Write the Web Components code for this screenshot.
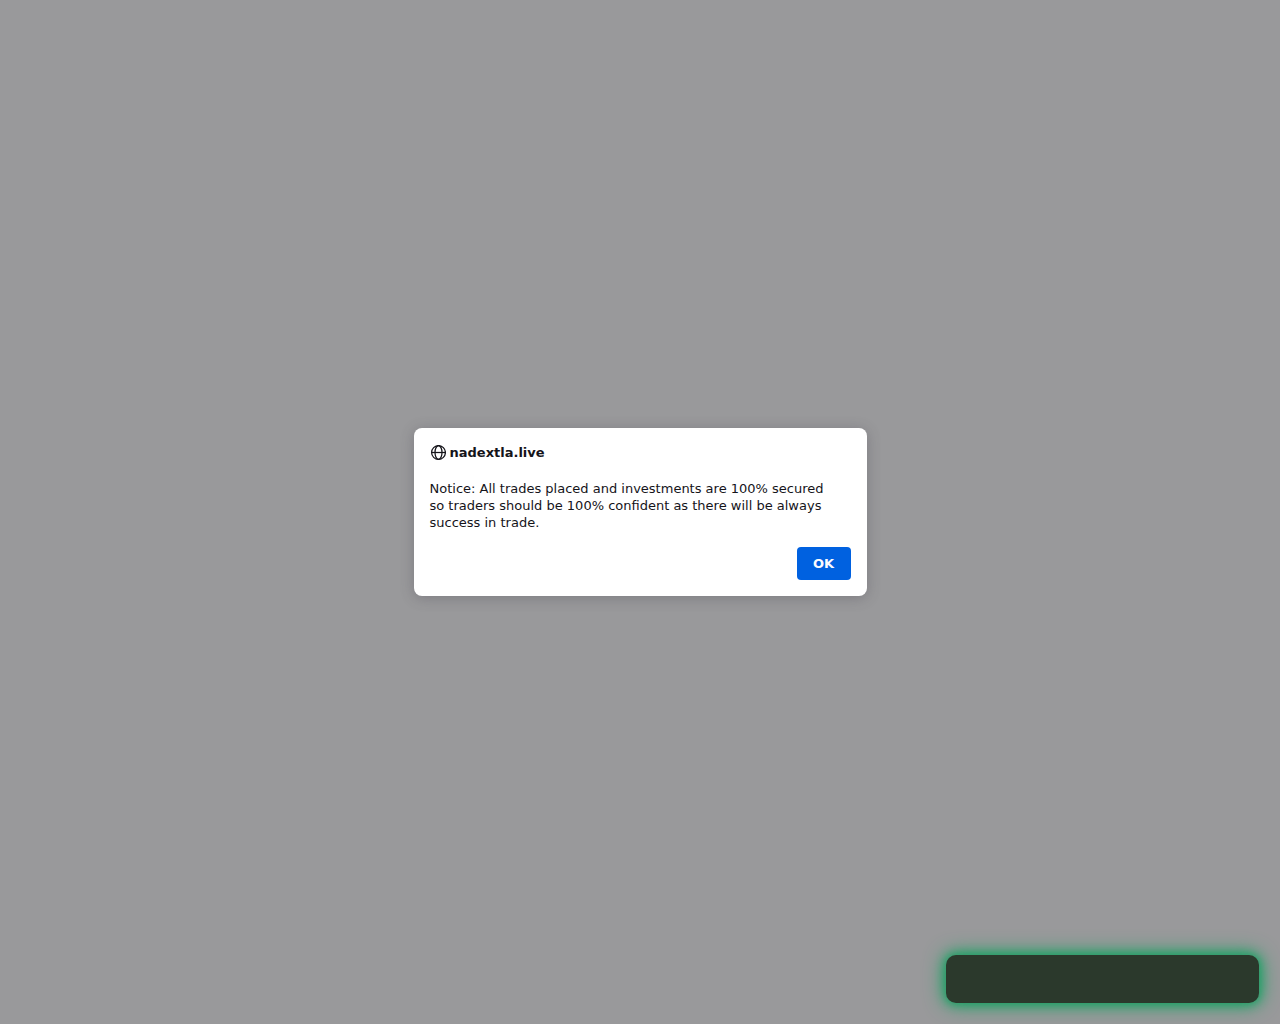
<!DOCTYPE html>
<html lang="en">
<head>
<meta charset="utf-8">
<meta name="viewport" content="width=device-width, initial-scale=1">
<title>nadextla.live</title>
<style>
html, body { height: 100%; margin: 0; }
body { background: #99999b; color: #15141a; font: 13px/17px "DejaVu Sans", sans-serif; overflow: hidden; }
</style>
</head>
<body>
<page-overlay>
  <alert-dialog site="nadextla.live">Notice: All trades placed and investments are 100% secured so traders should be 100% confident as there will be always success in trade.</alert-dialog>
  <toast-box slot="toast"></toast-box>
</page-overlay>
<script>
customElements.define('page-overlay', class extends HTMLElement {
  constructor() {
    super();
    this.attachShadow({ mode: 'open' }).innerHTML = `
      <style>
        :host { display: flex; align-items: center; justify-content: center; min-height: 100%; }
        .corner { position: fixed; right: 21px; bottom: 21px; }
      </style>
      <slot></slot>
      <div class="corner"><slot name="toast"></slot></div>`;
  }
});

customElements.define('globe-icon', class extends HTMLElement {
  constructor() {
    super();
    this.attachShadow({ mode: 'open' }).innerHTML = `
      <style>
        :host { display: block; width: 16px; height: 16px; }
        svg { display: block; width: 100%; height: 100%; }
      </style>
      <svg viewBox="0 0 16 16" fill="none" stroke="currentColor" stroke-width="1.25" aria-hidden="true">
        <circle cx="8.5" cy="7.5" r="6.9"/>
        <ellipse cx="8.5" cy="7.5" rx="3.5" ry="6.9"/>
        <path d="M1.6 7.5h13.8"/>
      </svg>`;
  }
});

customElements.define('alert-dialog', class extends HTMLElement {
  constructor() {
    super();
    this.attachShadow({ mode: 'open' }).innerHTML = `
      <style>
        :host { display: block; box-sizing: border-box; width: 453px; max-width: calc(100% - 32px); }
        section { padding: 16px; background: #fff; border-radius: 8px; box-shadow: 0 2px 14px rgba(58, 57, 68, .3); }
        header { display: flex; align-items: center; gap: 4px; }
        h1 { margin: 0; font-size: inherit; font-weight: 700; }
        p { margin: 19px 0 16px; max-width: 408px; }
        footer { display: flex; justify-content: flex-end; }
        button { min-width: 54px; padding: 8px 16px; border: 0; border-radius: 4px; background: #0061e0; color: #fbfbfe; font: inherit; font-weight: 700; }
      </style>
      <section role="alertdialog" aria-labelledby="site" aria-describedby="message">
        <header><globe-icon></globe-icon><h1 id="site"></h1></header>
        <p id="message"><slot></slot></p>
        <footer><button type="button">OK</button></footer>
      </section>`;
  }
  connectedCallback() {
    this.shadowRoot.getElementById('site').textContent = this.getAttribute('site');
  }
});

customElements.define('toast-box', class extends HTMLElement {
  constructor() {
    super();
    this.attachShadow({ mode: 'open' }).innerHTML = `
      <style>
        :host { display: block; box-sizing: border-box; width: 313px; height: 48px; border-radius: 10px; background: #2b392c; box-shadow: 0 0 10px 1px #1fa065, 0 0 20px 2px #1fa065; }
      </style>
      <slot></slot>`;
  }
});
</script>
</body>
</html>
